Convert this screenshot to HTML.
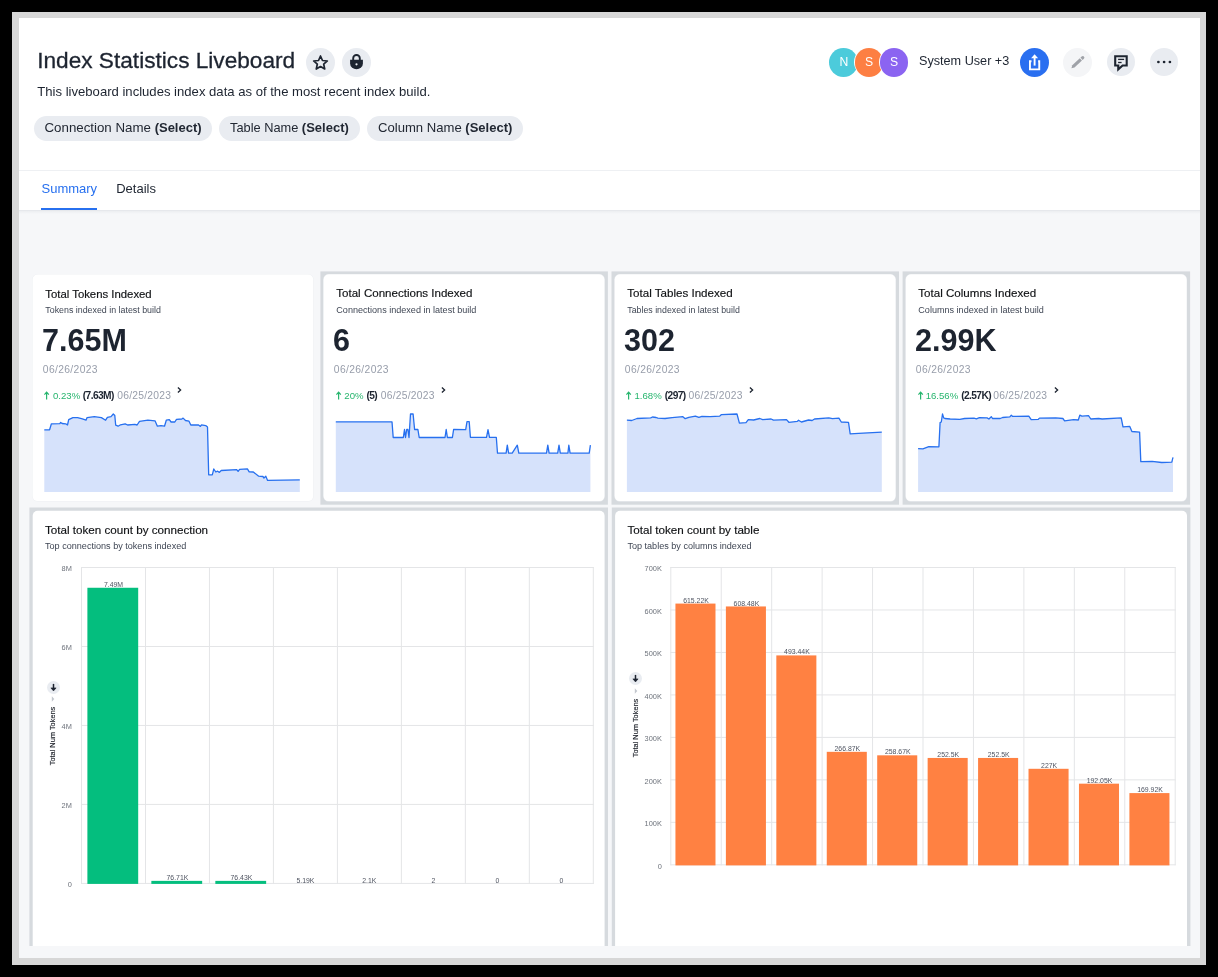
<!DOCTYPE html><html><head><meta charset="utf-8"><title>Index Statistics Liveboard</title><style>
*{margin:0;padding:0;box-sizing:border-box}
html,body{width:1218px;height:977px;overflow:hidden;background:#000}
body{font-family:"Liberation Sans",sans-serif;position:relative}
.t{position:absolute;line-height:1;white-space:nowrap}
.abs{position:absolute}
.circ{position:absolute;border-radius:50%}
</style></head><body><div id="root" style="position:absolute;left:0;top:0;width:1218px;height:977px;background:#000;will-change:transform">
<div class="abs" style="left:12px;top:12px;width:1194px;height:953px;background:#d7d7d7"></div>
<div class="abs" style="left:19px;top:18px;width:1181px;height:940px;background:#f6f7f9"></div>
<div class="abs" style="left:19px;top:18px;width:1181px;height:193px;background:#fff"></div>
<div class="abs" style="left:19px;top:170px;width:1181px;height:1px;background:#eef0f3"></div>
<div class="abs" style="left:19px;top:210px;width:1181px;height:1px;background:#e6e8ec"></div>
<div class="abs" style="left:19px;top:211px;width:1181px;height:3px;background:linear-gradient(#eceef1,#f6f7f9)"></div>
<div class="t" style="left:37.20px;top:49.03px;font-size:22.65px;color:#1d2430;font-weight:400;-webkit-text-stroke:0.3px #1d2430">Index Statistics Liveboard</div>
<div class="t" style="left:37.30px;top:84.81px;font-size:13.1px;color:#1d2430;font-weight:400;">This liveboard includes index data as of the most recent index build.</div>
<div class="abs" style="left:33.5px;top:116px;width:178.1px;height:25px;border-radius:13px;background:#e9ecf1"></div>
<div class="t" style="left:44.50px;top:120.94px;font-size:13.3px;color:#222833;font-weight:400;">Connection Name <b style="font-weight:700;font-size:13px">(Select)</b></div>
<div class="abs" style="left:219px;top:116px;width:140.7px;height:25px;border-radius:13px;background:#e9ecf1"></div>
<div class="t" style="left:230.00px;top:121.36px;font-size:12.8px;color:#222833;font-weight:400;">Table Name <b style="font-weight:700;font-size:13px">(Select)</b></div>
<div class="abs" style="left:367px;top:116px;width:156.3px;height:25px;border-radius:13px;background:#e9ecf1"></div>
<div class="t" style="left:378.00px;top:121.11px;font-size:13.1px;color:#222833;font-weight:400;">Column Name <b style="font-weight:700;font-size:13px">(Select)</b></div>
<div class="circ" style="left:306.00px;top:47.50px;width:29px;height:29px;background:#e9ecf1"></div>
<svg class="abs" style="left:306.00px;top:47.50px" width="29" height="29" viewBox="-14.5 -14.5 29 29"><polygon points="0.00,-6.50 1.97,-2.01 6.85,-1.52 3.19,1.74 4.23,6.52 0.00,4.05 -4.23,6.52 -3.19,1.74 -6.85,-1.52 -1.97,-2.01" fill="none" stroke="#1d2430" stroke-width="1.7" stroke-linejoin="round"/></svg>
<div class="circ" style="left:341.90px;top:47.50px;width:29px;height:29px;background:#e9ecf1"></div>
<svg class="abs" style="left:341.90px;top:47.50px" width="29" height="29" viewBox="-14.5 -14.5 29 29"><path d="M-3.3,-2.6 V-4.2 A3.3,3.3 0 0 1 3.3,-4.2 V-2.6" fill="none" stroke="#1d2430" stroke-width="1.9"/><path d="M-6.4,-2.8 H6.4 V1 A6.4,5.8 0 0 1 -6.4,1 Z" fill="#1d2430"/><circle cx="0" cy="1.8" r="1.1" fill="#e9ecf1"/></svg>
<div class="circ" style="left:828.50px;top:46.90px;width:30.6px;height:30.6px;background:#fff"></div>
<div class="circ" style="left:829.40px;top:47.80px;width:28.8px;height:28.8px;background:#4ccbdb"></div>
<div class="t" style="left:843.90px;transform:translateX(-50%);top:56.37px;font-size:12.2px;color:#fff;font-weight:400;">N</div>
<div class="circ" style="left:853.70px;top:46.90px;width:30.6px;height:30.6px;background:#fff"></div>
<div class="circ" style="left:854.60px;top:47.80px;width:28.8px;height:28.8px;background:#fd7f43"></div>
<div class="t" style="left:869.10px;transform:translateX(-50%);top:56.37px;font-size:12.2px;color:#fff;font-weight:400;">S</div>
<div class="circ" style="left:878.70px;top:46.90px;width:30.6px;height:30.6px;background:#fff"></div>
<div class="circ" style="left:879.60px;top:47.80px;width:28.8px;height:28.8px;background:#8b64f1"></div>
<div class="t" style="left:894.10px;transform:translateX(-50%);top:56.37px;font-size:12.2px;color:#fff;font-weight:400;">S</div>
<div class="t" style="left:919.00px;top:55.49px;font-size:12.65px;color:#1d2430;font-weight:400;">System User +3</div>
<div class="circ" style="left:1019.90px;top:47.70px;width:29px;height:29px;background:#2a6ff0"></div>
<svg class="abs" style="left:1019.90px;top:47.70px" width="29" height="29" viewBox="-14.5 -14.5 29 29"><path d="M-3.0,-1.25 H-4.55 V6.85 H4.75 V-1.25 H3.6" fill="none" stroke="#fff" stroke-width="1.9"/><path d="M0.1,3.1 V-5.0" stroke="#fff" stroke-width="1.9"/><path d="M-3.4,-4.2 L0.1,-8.2 L3.6,-4.2 Z" fill="#fff"/></svg>
<div class="circ" style="left:1063.10px;top:47.50px;width:29px;height:29px;background:#f4f5f7"></div>
<svg class="abs" style="left:1063.10px;top:47.50px" width="29" height="29" viewBox="-14.5 -14.5 29 29"><g transform="rotate(-43)"><path d="M-8.3,0 L-5.6,-1.6 H4.6 V1.6 H-5.6 Z" fill="#9fa2a8"/><path d="M5.5,-1.6 H7.2 A1.6,1.6 0 0 1 7.2,1.6 H5.5 Z" fill="#9fa2a8"/></g></svg>
<div class="circ" style="left:1106.90px;top:48.00px;width:28px;height:28px;background:#e9ecf1"></div>
<svg class="abs" style="left:1106.90px;top:48.00px" width="28" height="28" viewBox="-14.0 -14.0 28 28"><path d="M-2.75,3.55 H-5.8 V-5.75 H5.7 V3.55 H1.6 L-2.75,7.4 Z" fill="none" stroke="#1d2430" stroke-width="2.1" stroke-linejoin="miter"/><path d="M-2.9,-2.6 H3.1" stroke="#1d2430" stroke-width="1.3"/><path d="M-2.9,0.5 H0.6" stroke="#1d2430" stroke-width="1.3"/></svg>
<div class="circ" style="left:1149.90px;top:48.00px;width:28px;height:28px;background:#e9ecf1"></div>
<svg class="abs" style="left:1149.90px;top:48.00px" width="28" height="28" viewBox="-14.0 -14.0 28 28"><circle cx="-5.6" cy="0" r="1.35" fill="#1d2430"/><circle cx="0.1" cy="0" r="1.35" fill="#1d2430"/><circle cx="5.9" cy="0" r="1.35" fill="#1d2430"/></svg>
<div class="t" style="left:41.50px;top:182.30px;font-size:13px;color:#2770ef;font-weight:400;">Summary</div>
<div class="t" style="left:116.20px;top:182.30px;font-size:13px;color:#1d2430;font-weight:400;">Details</div>
<div class="abs" style="left:41px;top:208px;width:56px;height:2px;background:#2770ef"></div>
<svg class="abs" style="left:0;top:0" width="1218" height="977"><rect x="32.10" y="274.10" width="281.60" height="227.50" rx="5.5" fill="#eef0f3"/><rect x="32.60" y="274.60" width="280.60" height="226.50" rx="5" fill="#fff"/></svg>
<div class="t" style="left:45.30px;top:288.59px;font-size:11.35px;color:#0e1013;font-weight:400;-webkit-text-stroke:0.15px #0e1013">Total Tokens Indexed</div>
<div class="t" style="left:45.30px;top:306.21px;font-size:8.85px;color:#3f4654;font-weight:400;">Tokens indexed in latest build</div>
<div class="t" style="left:42.10px;top:325.38px;font-size:30.5px;color:#1d2430;font-weight:700;">7.65M</div>
<div class="t" style="left:42.80px;top:365.08px;font-size:10.3px;color:#979daa;font-weight:400;letter-spacing:0.36px">06/26/2023</div>
<svg class="abs" style="left:44.0px;top:391px" width="6" height="9" viewBox="0 0 6 9"><path d="M2.6,8.4 V1.6" stroke="#27b56e" stroke-width="1.2"/><path d="M0.4,3.6 L2.6,1.1 L4.8,3.6" fill="none" stroke="#27b56e" stroke-width="1.2"/></svg>
<div class="t" style="left:53.00px;top:391.27px;font-size:9.6px;color:#27b56e;font-weight:400;letter-spacing:0px">0.23%</div>
<div class="t" style="left:82.80px;top:390.87px;font-size:10.2px;color:#1d2430;font-weight:700;letter-spacing:-0.6px">(7.63M)</div>
<div class="t" style="left:117.20px;top:390.58px;font-size:10.3px;color:#979daa;font-weight:400;letter-spacing:0.25px">06/25/2023</div>
<svg class="abs" style="left:176.5px;top:387px" width="5" height="6" viewBox="0 0 5 6"><path d="M0.9,0.6 L3.6,3 L0.9,5.4" fill="none" stroke="#1d2430" stroke-width="1.3"/></svg>
<svg class="abs" style="left:0;top:0" width="1218" height="977"><path d="M44.3,429.8 L49.6,429.8 L51.4,423.8 L59.8,423.6 L60.7,422.4 L62.1,423.5 L65.7,423.8 L67.5,425.0 L68.7,419.6 L72.9,417.6 L77.6,417.6 L82.4,418.8 L86.0,420.2 L87.1,417.6 L94.3,416.7 L101.4,417.6 L105.6,420.2 L107.4,417.3 L111.0,416.7 L113.3,414.0 L114.8,415.5 L115.7,425.2 L118.1,426.2 L120.5,424.8 L125.2,423.8 L127.6,425.0 L134.8,424.4 L137.1,425.0 L139.5,421.4 L147.9,420.2 L155.0,420.8 L157.4,426.2 L161.0,425.6 L164.5,426.2 L166.3,420.2 L169.3,419.6 L171.1,422.0 L174.8,422.0 L176.5,419.3 L181.9,419.0 L183.1,418.1 L185.5,420.5 L189.0,421.2 L190.8,425.0 L198.6,425.0 L200.4,426.4 L201.5,424.8 L205.7,425.6 L207.5,427.1 L208.7,474.8 L212.3,474.8 L213.8,469.0 L215.8,472.0 L217.6,471.2 L219.4,472.4 L221.2,470.5 L236.7,469.6 L238.1,471.4 L239.6,469.3 L247.4,468.8 L249.2,471.8 L253.3,472.0 L258.7,476.2 L262.9,476.5 L264.0,478.0 L265.8,476.2 L267.6,480.4 L299.8,479.8 L299.8,492 L44.3,492 Z" fill="#d6e2fb"/><path d="M44.3,429.8 L49.6,429.8 L51.4,423.8 L59.8,423.6 L60.7,422.4 L62.1,423.5 L65.7,423.8 L67.5,425.0 L68.7,419.6 L72.9,417.6 L77.6,417.6 L82.4,418.8 L86.0,420.2 L87.1,417.6 L94.3,416.7 L101.4,417.6 L105.6,420.2 L107.4,417.3 L111.0,416.7 L113.3,414.0 L114.8,415.5 L115.7,425.2 L118.1,426.2 L120.5,424.8 L125.2,423.8 L127.6,425.0 L134.8,424.4 L137.1,425.0 L139.5,421.4 L147.9,420.2 L155.0,420.8 L157.4,426.2 L161.0,425.6 L164.5,426.2 L166.3,420.2 L169.3,419.6 L171.1,422.0 L174.8,422.0 L176.5,419.3 L181.9,419.0 L183.1,418.1 L185.5,420.5 L189.0,421.2 L190.8,425.0 L198.6,425.0 L200.4,426.4 L201.5,424.8 L205.7,425.6 L207.5,427.1 L208.7,474.8 L212.3,474.8 L213.8,469.0 L215.8,472.0 L217.6,471.2 L219.4,472.4 L221.2,470.5 L236.7,469.6 L238.1,471.4 L239.6,469.3 L247.4,468.8 L249.2,471.8 L253.3,472.0 L258.7,476.2 L262.9,476.5 L264.0,478.0 L265.8,476.2 L267.6,480.4 L299.8,479.8" fill="none" stroke="#2770ef" stroke-width="1.3" stroke-linejoin="round"/></svg>
<svg class="abs" style="left:0;top:0" width="1218" height="977"><rect x="320.40" y="271.40" width="287.50" height="233.30" fill="#d6dade"/><rect x="323.20" y="274.10" width="281.60" height="227.50" rx="5.5" fill="#eef0f3"/><rect x="323.70" y="274.60" width="280.60" height="226.50" rx="5" fill="#fff"/></svg>
<div class="t" style="left:336.30px;top:288.41px;font-size:11.56px;color:#0e1013;font-weight:400;-webkit-text-stroke:0.15px #0e1013">Total Connections Indexed</div>
<div class="t" style="left:336.30px;top:306.02px;font-size:9.07px;color:#3f4654;font-weight:400;">Connections indexed in latest build</div>
<div class="t" style="left:333.10px;top:325.38px;font-size:30.5px;color:#1d2430;font-weight:700;">6</div>
<div class="t" style="left:333.80px;top:365.08px;font-size:10.3px;color:#979daa;font-weight:400;letter-spacing:0.36px">06/26/2023</div>
<svg class="abs" style="left:335.5px;top:391px" width="6" height="9" viewBox="0 0 6 9"><path d="M2.6,8.4 V1.6" stroke="#27b56e" stroke-width="1.2"/><path d="M0.4,3.6 L2.6,1.1 L4.8,3.6" fill="none" stroke="#27b56e" stroke-width="1.2"/></svg>
<div class="t" style="left:344.30px;top:391.27px;font-size:9.6px;color:#27b56e;font-weight:400;letter-spacing:0px">20%</div>
<div class="t" style="left:366.40px;top:390.87px;font-size:10.2px;color:#1d2430;font-weight:700;letter-spacing:-0.6px">(5)</div>
<div class="t" style="left:380.70px;top:390.58px;font-size:10.3px;color:#979daa;font-weight:400;letter-spacing:0.25px">06/25/2023</div>
<svg class="abs" style="left:441.4px;top:387px" width="5" height="6" viewBox="0 0 5 6"><path d="M0.9,0.6 L3.6,3 L0.9,5.4" fill="none" stroke="#1d2430" stroke-width="1.3"/></svg>
<svg class="abs" style="left:0;top:0" width="1218" height="977"><path d="M335.8,421.8 L392.0,421.8 L393.2,437.5 L403.3,437.5 L404.5,429.5 L405.5,437.5 L406.7,429.5 L407.9,429.5 L409.0,437.5 L410.5,414.0 L413.1,414.0 L414.6,429.5 L417.9,429.5 L419.2,437.5 L445.0,437.5 L446.2,429.5 L447.4,437.5 L452.4,437.5 L453.6,429.5 L465.7,429.7 L467.0,421.6 L469.2,421.6 L470.4,437.3 L486.5,437.3 L488.0,429.7 L489.5,437.3 L496.3,437.3 L497.5,453.2 L506.1,453.2 L507.3,445.2 L508.6,453.2 L512.2,453.2 L517.3,445.2 L518.8,453.2 L546.5,453.2 L547.8,445.2 L549.1,453.2 L557.7,453.2 L559.0,445.2 L560.3,453.2 L567.9,453.2 L568.8,445.2 L570.1,453.2 L589.2,453.2 L590.4,445.2 L590.4,492 L335.8,492 Z" fill="#d6e2fb"/><path d="M335.8,421.8 L392.0,421.8 L393.2,437.5 L403.3,437.5 L404.5,429.5 L405.5,437.5 L406.7,429.5 L407.9,429.5 L409.0,437.5 L410.5,414.0 L413.1,414.0 L414.6,429.5 L417.9,429.5 L419.2,437.5 L445.0,437.5 L446.2,429.5 L447.4,437.5 L452.4,437.5 L453.6,429.5 L465.7,429.7 L467.0,421.6 L469.2,421.6 L470.4,437.3 L486.5,437.3 L488.0,429.7 L489.5,437.3 L496.3,437.3 L497.5,453.2 L506.1,453.2 L507.3,445.2 L508.6,453.2 L512.2,453.2 L517.3,445.2 L518.8,453.2 L546.5,453.2 L547.8,445.2 L549.1,453.2 L557.7,453.2 L559.0,445.2 L560.3,453.2 L567.9,453.2 L568.8,445.2 L570.1,453.2 L589.2,453.2 L590.4,445.2" fill="none" stroke="#2770ef" stroke-width="1.3" stroke-linejoin="round"/></svg>
<svg class="abs" style="left:0;top:0" width="1218" height="977"><rect x="611.50" y="271.40" width="287.50" height="233.30" fill="#d6dade"/><rect x="614.30" y="274.10" width="281.60" height="227.50" rx="5.5" fill="#eef0f3"/><rect x="614.80" y="274.60" width="280.60" height="226.50" rx="5" fill="#fff"/></svg>
<div class="t" style="left:627.30px;top:288.39px;font-size:11.59px;color:#0e1013;font-weight:400;-webkit-text-stroke:0.15px #0e1013">Total Tables Indexed</div>
<div class="t" style="left:627.30px;top:306.24px;font-size:8.81px;color:#3f4654;font-weight:400;">Tables indexed in latest build</div>
<div class="t" style="left:624.10px;top:325.38px;font-size:30.5px;color:#1d2430;font-weight:700;">302</div>
<div class="t" style="left:624.80px;top:365.08px;font-size:10.3px;color:#979daa;font-weight:400;letter-spacing:0.36px">06/26/2023</div>
<svg class="abs" style="left:626.2px;top:391px" width="6" height="9" viewBox="0 0 6 9"><path d="M2.6,8.4 V1.6" stroke="#27b56e" stroke-width="1.2"/><path d="M0.4,3.6 L2.6,1.1 L4.8,3.6" fill="none" stroke="#27b56e" stroke-width="1.2"/></svg>
<div class="t" style="left:634.50px;top:391.27px;font-size:9.6px;color:#27b56e;font-weight:400;letter-spacing:0px">1.68%</div>
<div class="t" style="left:664.80px;top:390.87px;font-size:10.2px;color:#1d2430;font-weight:700;letter-spacing:-0.6px">(297)</div>
<div class="t" style="left:688.60px;top:390.58px;font-size:10.3px;color:#979daa;font-weight:400;letter-spacing:0.25px">06/25/2023</div>
<svg class="abs" style="left:749.3px;top:387px" width="5" height="6" viewBox="0 0 5 6"><path d="M0.9,0.6 L3.6,3 L0.9,5.4" fill="none" stroke="#1d2430" stroke-width="1.3"/></svg>
<svg class="abs" style="left:0;top:0" width="1218" height="977"><path d="M626.9,420.2 L631.7,420.5 L637.0,418.5 L650.7,417.9 L652.5,417.0 L656.1,417.5 L657.9,418.2 L665.0,418.5 L672.1,417.6 L682.9,416.7 L685.2,418.7 L688.8,417.3 L695.4,416.1 L698.9,417.3 L701.9,416.3 L710.2,416.7 L719.8,416.1 L721.5,414.6 L737.0,414.0 L739.4,423.2 L746.0,422.6 L748.3,419.6 L753.7,420.0 L759.8,418.5 L762.7,419.6 L771.1,419.0 L773.5,420.2 L786.5,419.6 L788.9,422.3 L797.3,421.4 L798.5,420.2 L801.4,422.0 L808.6,420.0 L812.1,420.5 L814.5,419.0 L828.8,417.9 L832.4,418.7 L838.9,418.1 L841.3,422.0 L848.5,422.4 L850.2,433.9 L858.6,433.3 L881.8,432.1 L881.8,492 L626.9,492 Z" fill="#d6e2fb"/><path d="M626.9,420.2 L631.7,420.5 L637.0,418.5 L650.7,417.9 L652.5,417.0 L656.1,417.5 L657.9,418.2 L665.0,418.5 L672.1,417.6 L682.9,416.7 L685.2,418.7 L688.8,417.3 L695.4,416.1 L698.9,417.3 L701.9,416.3 L710.2,416.7 L719.8,416.1 L721.5,414.6 L737.0,414.0 L739.4,423.2 L746.0,422.6 L748.3,419.6 L753.7,420.0 L759.8,418.5 L762.7,419.6 L771.1,419.0 L773.5,420.2 L786.5,419.6 L788.9,422.3 L797.3,421.4 L798.5,420.2 L801.4,422.0 L808.6,420.0 L812.1,420.5 L814.5,419.0 L828.8,417.9 L832.4,418.7 L838.9,418.1 L841.3,422.0 L848.5,422.4 L850.2,433.9 L858.6,433.3 L881.8,432.1" fill="none" stroke="#2770ef" stroke-width="1.3" stroke-linejoin="round"/></svg>
<svg class="abs" style="left:0;top:0" width="1218" height="977"><rect x="902.60" y="271.40" width="287.50" height="233.30" fill="#d6dade"/><rect x="905.40" y="274.10" width="281.60" height="227.50" rx="5.5" fill="#eef0f3"/><rect x="905.90" y="274.60" width="280.60" height="226.50" rx="5" fill="#fff"/></svg>
<div class="t" style="left:918.30px;top:288.39px;font-size:11.59px;color:#0e1013;font-weight:400;-webkit-text-stroke:0.15px #0e1013">Total Columns Indexed</div>
<div class="t" style="left:918.30px;top:306.02px;font-size:9.07px;color:#3f4654;font-weight:400;">Columns indexed in latest build</div>
<div class="t" style="left:915.10px;top:325.38px;font-size:30.5px;color:#1d2430;font-weight:700;">2.99K</div>
<div class="t" style="left:915.80px;top:365.08px;font-size:10.3px;color:#979daa;font-weight:400;letter-spacing:0.36px">06/26/2023</div>
<svg class="abs" style="left:917.9px;top:391px" width="6" height="9" viewBox="0 0 6 9"><path d="M2.6,8.4 V1.6" stroke="#27b56e" stroke-width="1.2"/><path d="M0.4,3.6 L2.6,1.1 L4.8,3.6" fill="none" stroke="#27b56e" stroke-width="1.2"/></svg>
<div class="t" style="left:925.70px;top:391.27px;font-size:9.6px;color:#27b56e;font-weight:400;letter-spacing:0px">16.56%</div>
<div class="t" style="left:961.20px;top:390.87px;font-size:10.2px;color:#1d2430;font-weight:700;letter-spacing:-0.6px">(2.57K)</div>
<div class="t" style="left:993.30px;top:390.58px;font-size:10.3px;color:#979daa;font-weight:400;letter-spacing:0.25px">06/25/2023</div>
<svg class="abs" style="left:1053.6px;top:387px" width="5" height="6" viewBox="0 0 5 6"><path d="M0.9,0.6 L3.6,3 L0.9,5.4" fill="none" stroke="#1d2430" stroke-width="1.3"/></svg>
<svg class="abs" style="left:0;top:0" width="1218" height="977"><path d="M918.1,448.6 L922.9,448.8 L928.8,446.7 L938.9,446.8 L940.1,422.6 L941.3,422.0 L942.5,414.0 L943.7,417.9 L944.9,418.5 L950.2,419.0 L959.8,419.3 L964.5,418.5 L974.0,418.2 L976.4,418.8 L979.4,417.6 L987.1,417.9 L988.9,419.0 L991.3,416.7 L992.5,418.5 L1000.2,418.5 L1002.6,417.5 L1009.8,416.9 L1011.3,415.2 L1012.7,416.4 L1028.8,416.1 L1031.2,419.6 L1038.3,419.3 L1039.5,418.1 L1055.7,417.9 L1062.9,418.5 L1064.6,420.8 L1073.6,419.6 L1078.3,420.0 L1079.8,415.2 L1081.9,416.1 L1088.5,415.7 L1090.8,419.0 L1098.6,418.5 L1102.1,419.0 L1121.2,417.9 L1123.0,426.8 L1129.8,426.4 L1131.9,431.5 L1139.6,432.1 L1140.8,461.7 L1152.1,461.3 L1161.7,462.5 L1171.8,462.1 L1173.0,457.4 L1173.0,492 L918.1,492 Z" fill="#d6e2fb"/><path d="M918.1,448.6 L922.9,448.8 L928.8,446.7 L938.9,446.8 L940.1,422.6 L941.3,422.0 L942.5,414.0 L943.7,417.9 L944.9,418.5 L950.2,419.0 L959.8,419.3 L964.5,418.5 L974.0,418.2 L976.4,418.8 L979.4,417.6 L987.1,417.9 L988.9,419.0 L991.3,416.7 L992.5,418.5 L1000.2,418.5 L1002.6,417.5 L1009.8,416.9 L1011.3,415.2 L1012.7,416.4 L1028.8,416.1 L1031.2,419.6 L1038.3,419.3 L1039.5,418.1 L1055.7,417.9 L1062.9,418.5 L1064.6,420.8 L1073.6,419.6 L1078.3,420.0 L1079.8,415.2 L1081.9,416.1 L1088.5,415.7 L1090.8,419.0 L1098.6,418.5 L1102.1,419.0 L1121.2,417.9 L1123.0,426.8 L1129.8,426.4 L1131.9,431.5 L1139.6,432.1 L1140.8,461.7 L1152.1,461.3 L1161.7,462.5 L1171.8,462.1 L1173.0,457.4" fill="none" stroke="#2770ef" stroke-width="1.3" stroke-linejoin="round"/></svg>
<div class="abs" style="left:0;top:0;width:1218px;height:946px;overflow:hidden"><svg width="1218" height="977"><rect x="29.40" y="507.5" width="578.60" height="460" fill="#d6dade"/><rect x="32.70" y="510.8" width="571.90" height="450" rx="5" fill="#fff"/></svg></div>
<div class="t" style="left:45.00px;top:524.34px;font-size:11.65px;color:#0e1013;font-weight:400;-webkit-text-stroke:0.15px #0e1013">Total token count by connection</div>
<div class="t" style="left:45.00px;top:541.51px;font-size:9.08px;color:#3f4654;font-weight:400;">Top connections by tokens indexed</div>
<svg class="abs" style="left:0;top:0" width="1218" height="977"><rect x="81.00" y="567.00" width="512.80" height="1" fill="#e4e5e7"/><rect x="81.00" y="645.98" width="512.80" height="1" fill="#e4e5e7"/><rect x="81.00" y="724.95" width="512.80" height="1" fill="#e4e5e7"/><rect x="81.00" y="803.92" width="512.80" height="1" fill="#e4e5e7"/><rect x="81.00" y="882.90" width="512.80" height="1" fill="#e4e5e7"/><rect x="81.00" y="567.00" width="1" height="316.90" fill="#e4e5e7"/><rect x="144.97" y="567.00" width="1" height="316.90" fill="#e4e5e7"/><rect x="208.95" y="567.00" width="1" height="316.90" fill="#e4e5e7"/><rect x="272.92" y="567.00" width="1" height="316.90" fill="#e4e5e7"/><rect x="336.90" y="567.00" width="1" height="316.90" fill="#e4e5e7"/><rect x="400.88" y="567.00" width="1" height="316.90" fill="#e4e5e7"/><rect x="464.85" y="567.00" width="1" height="316.90" fill="#e4e5e7"/><rect x="528.82" y="567.00" width="1" height="316.90" fill="#e4e5e7"/><rect x="592.80" y="567.00" width="1" height="316.90" fill="#e4e5e7"/><rect x="87.39" y="587.76" width="50.80" height="296.14" fill="#04be7e"/><rect x="151.36" y="880.87" width="50.80" height="3.03" fill="#04be7e"/><rect x="215.34" y="880.88" width="50.80" height="3.02" fill="#04be7e"/></svg>
<div class="t" style="left:113.49px;transform:translateX(-50%);top:581.82px;font-size:6.9px;color:#4f5461;font-weight:400;">7.49M</div>
<div class="t" style="left:177.46px;transform:translateX(-50%);top:874.93px;font-size:6.9px;color:#4f5461;font-weight:400;">76.71K</div>
<div class="t" style="left:241.44px;transform:translateX(-50%);top:874.94px;font-size:6.9px;color:#4f5461;font-weight:400;">76.43K</div>
<div class="t" style="left:305.41px;transform:translateX(-50%);top:877.86px;font-size:6.9px;color:#4f5461;font-weight:400;">5.19K</div>
<div class="t" style="left:369.39px;transform:translateX(-50%);top:877.86px;font-size:6.9px;color:#4f5461;font-weight:400;">2.1K</div>
<div class="t" style="left:433.36px;transform:translateX(-50%);top:877.86px;font-size:6.9px;color:#4f5461;font-weight:400;">2</div>
<div class="t" style="left:497.34px;transform:translateX(-50%);top:877.86px;font-size:6.9px;color:#4f5461;font-weight:400;">0</div>
<div class="t" style="left:561.31px;transform:translateX(-50%);top:877.86px;font-size:6.9px;color:#4f5461;font-weight:400;">0</div>
<div class="t" style="right:1146.20px;top:565.24px;font-size:7.4px;color:#6e737c;font-weight:400;">8M</div>
<div class="t" style="right:1146.20px;top:644.21px;font-size:7.4px;color:#6e737c;font-weight:400;">6M</div>
<div class="t" style="right:1146.20px;top:723.19px;font-size:7.4px;color:#6e737c;font-weight:400;">4M</div>
<div class="t" style="right:1146.20px;top:802.16px;font-size:7.4px;color:#6e737c;font-weight:400;">2M</div>
<div class="t" style="right:1146.20px;top:881.14px;font-size:7.4px;color:#6e737c;font-weight:400;">0</div>
<div class="circ" style="left:46.90px;top:680.70px;width:13px;height:13px;background:#e9ecf1"></div>
<svg class="abs" style="left:46.90px;top:680.70px" width="13" height="13" viewBox="-6.5 -6.5 13 13"><path d="M0,-3.6 V2" stroke="#1d2430" stroke-width="1.5"/><path d="M-2.6,0.4 L0,3.4 L2.6,0.4 Z" fill="#1d2430" stroke="#1d2430" stroke-width="0.6" stroke-linejoin="round"/></svg>
<svg class="abs" style="left:51.40px;top:696.40px" width="4" height="6" viewBox="0 0 4 6"><path d="M0.8,0.3 L3.3,3 L0.8,5.7 Z" fill="#c3c7ce"/></svg>
<div class="t" style="left:53.40px;top:736.00px;font-size:7.4px;color:#1f232b;-webkit-text-stroke:0.15px #1f232b;transform:translate(-50%,-50%) rotate(-90deg)">Total Num Tokens</div>
<div class="abs" style="left:0;top:0;width:1218px;height:946px;overflow:hidden"><svg width="1218" height="977"><rect x="611.80" y="507.5" width="578.60" height="460" fill="#d6dade"/><rect x="615.10" y="510.8" width="571.90" height="450" rx="5" fill="#fff"/></svg></div>
<div class="t" style="left:627.40px;top:524.34px;font-size:11.65px;color:#0e1013;font-weight:400;-webkit-text-stroke:0.15px #0e1013">Total token count by table</div>
<div class="t" style="left:627.40px;top:541.51px;font-size:9.08px;color:#3f4654;font-weight:400;">Top tables by columns indexed</div>
<svg class="abs" style="left:0;top:0" width="1218" height="977"><rect x="670.30" y="567.00" width="505.40" height="1" fill="#e4e5e7"/><rect x="670.30" y="609.47" width="505.40" height="1" fill="#e4e5e7"/><rect x="670.30" y="651.94" width="505.40" height="1" fill="#e4e5e7"/><rect x="670.30" y="694.41" width="505.40" height="1" fill="#e4e5e7"/><rect x="670.30" y="736.89" width="505.40" height="1" fill="#e4e5e7"/><rect x="670.30" y="779.36" width="505.40" height="1" fill="#e4e5e7"/><rect x="670.30" y="821.83" width="505.40" height="1" fill="#e4e5e7"/><rect x="670.30" y="864.30" width="505.40" height="1" fill="#e4e5e7"/><rect x="670.30" y="567.00" width="1" height="298.30" fill="#e4e5e7"/><rect x="720.74" y="567.00" width="1" height="298.30" fill="#e4e5e7"/><rect x="771.18" y="567.00" width="1" height="298.30" fill="#e4e5e7"/><rect x="821.62" y="567.00" width="1" height="298.30" fill="#e4e5e7"/><rect x="872.06" y="567.00" width="1" height="298.30" fill="#e4e5e7"/><rect x="922.50" y="567.00" width="1" height="298.30" fill="#e4e5e7"/><rect x="972.94" y="567.00" width="1" height="298.30" fill="#e4e5e7"/><rect x="1023.38" y="567.00" width="1" height="298.30" fill="#e4e5e7"/><rect x="1073.82" y="567.00" width="1" height="298.30" fill="#e4e5e7"/><rect x="1124.26" y="567.00" width="1" height="298.30" fill="#e4e5e7"/><rect x="1174.70" y="567.00" width="1" height="298.30" fill="#e4e5e7"/><rect x="675.44" y="603.58" width="40.05" height="261.82" fill="#ff8142"/><rect x="725.88" y="606.45" width="40.05" height="258.95" fill="#ff8142"/><rect x="776.32" y="655.41" width="40.05" height="209.99" fill="#ff8142"/><rect x="826.76" y="751.83" width="40.05" height="113.57" fill="#ff8142"/><rect x="877.20" y="755.32" width="40.05" height="110.08" fill="#ff8142"/><rect x="927.64" y="757.94" width="40.05" height="107.46" fill="#ff8142"/><rect x="978.08" y="757.94" width="40.05" height="107.46" fill="#ff8142"/><rect x="1028.52" y="768.80" width="40.05" height="96.60" fill="#ff8142"/><rect x="1078.96" y="783.67" width="40.05" height="81.73" fill="#ff8142"/><rect x="1129.40" y="793.09" width="40.05" height="72.31" fill="#ff8142"/></svg>
<div class="t" style="left:696.02px;transform:translateX(-50%);top:597.64px;font-size:6.9px;color:#4f5461;font-weight:400;">615.22K</div>
<div class="t" style="left:746.46px;transform:translateX(-50%);top:600.51px;font-size:6.9px;color:#4f5461;font-weight:400;">608.48K</div>
<div class="t" style="left:796.90px;transform:translateX(-50%);top:649.47px;font-size:6.9px;color:#4f5461;font-weight:400;">493.44K</div>
<div class="t" style="left:847.34px;transform:translateX(-50%);top:745.89px;font-size:6.9px;color:#4f5461;font-weight:400;">266.87K</div>
<div class="t" style="left:897.78px;transform:translateX(-50%);top:749.38px;font-size:6.9px;color:#4f5461;font-weight:400;">258.67K</div>
<div class="t" style="left:948.22px;transform:translateX(-50%);top:752.00px;font-size:6.9px;color:#4f5461;font-weight:400;">252.5K</div>
<div class="t" style="left:998.66px;transform:translateX(-50%);top:752.00px;font-size:6.9px;color:#4f5461;font-weight:400;">252.5K</div>
<div class="t" style="left:1049.10px;transform:translateX(-50%);top:762.85px;font-size:6.9px;color:#4f5461;font-weight:400;">227K</div>
<div class="t" style="left:1099.54px;transform:translateX(-50%);top:777.73px;font-size:6.9px;color:#4f5461;font-weight:400;">192.05K</div>
<div class="t" style="left:1149.98px;transform:translateX(-50%);top:787.15px;font-size:6.9px;color:#4f5461;font-weight:400;">169.92K</div>
<div class="t" style="right:556.20px;top:565.24px;font-size:7.4px;color:#6e737c;font-weight:400;">700K</div>
<div class="t" style="right:556.20px;top:607.71px;font-size:7.4px;color:#6e737c;font-weight:400;">600K</div>
<div class="t" style="right:556.20px;top:650.18px;font-size:7.4px;color:#6e737c;font-weight:400;">500K</div>
<div class="t" style="right:556.20px;top:692.65px;font-size:7.4px;color:#6e737c;font-weight:400;">400K</div>
<div class="t" style="right:556.20px;top:735.12px;font-size:7.4px;color:#6e737c;font-weight:400;">300K</div>
<div class="t" style="right:556.20px;top:777.59px;font-size:7.4px;color:#6e737c;font-weight:400;">200K</div>
<div class="t" style="right:556.20px;top:820.06px;font-size:7.4px;color:#6e737c;font-weight:400;">100K</div>
<div class="t" style="right:556.20px;top:862.54px;font-size:7.4px;color:#6e737c;font-weight:400;">0</div>
<div class="circ" style="left:629.40px;top:671.90px;width:13px;height:13px;background:#e9ecf1"></div>
<svg class="abs" style="left:629.40px;top:671.90px" width="13" height="13" viewBox="-6.5 -6.5 13 13"><path d="M0,-3.6 V2" stroke="#1d2430" stroke-width="1.5"/><path d="M-2.6,0.4 L0,3.4 L2.6,0.4 Z" fill="#1d2430" stroke="#1d2430" stroke-width="0.6" stroke-linejoin="round"/></svg>
<svg class="abs" style="left:633.90px;top:687.60px" width="4" height="6" viewBox="0 0 4 6"><path d="M0.8,0.3 L3.3,3 L0.8,5.7 Z" fill="#c3c7ce"/></svg>
<div class="t" style="left:635.90px;top:727.70px;font-size:7.4px;color:#1f232b;-webkit-text-stroke:0.15px #1f232b;transform:translate(-50%,-50%) rotate(-90deg)">Total Num Tokens</div>
</div></body></html>
